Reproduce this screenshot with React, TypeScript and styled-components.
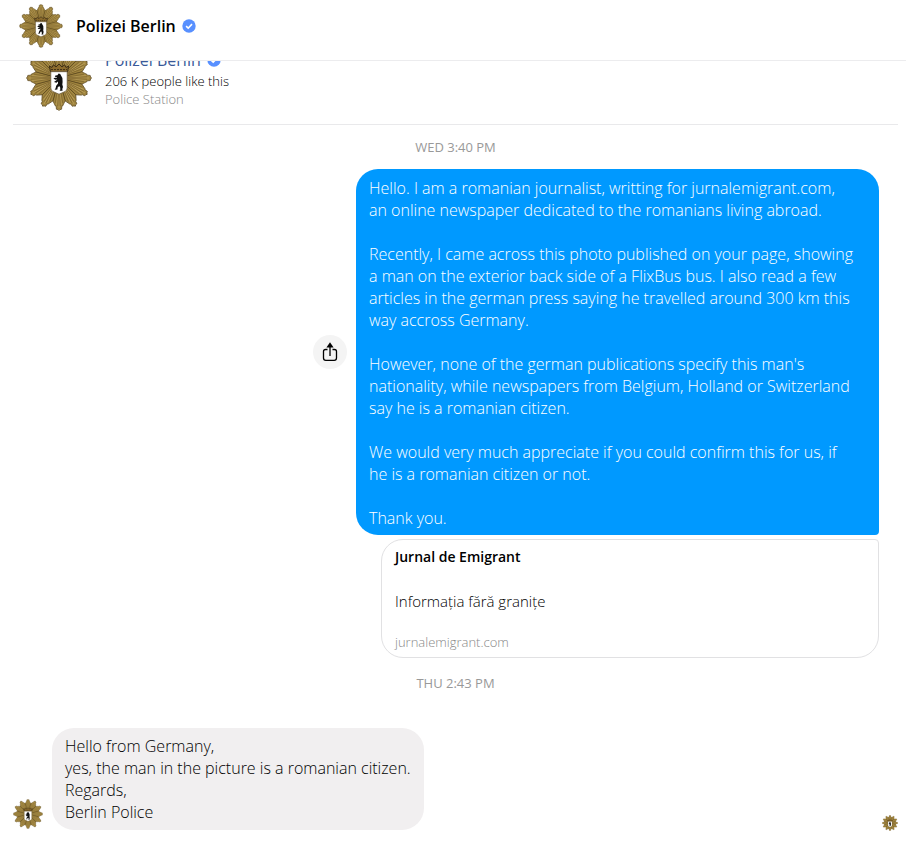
import React from "react";
import styled, { createGlobalStyle } from "styled-components";

const GlobalStyle = createGlobalStyle`
  * { box-sizing: border-box; }
  body {
    margin: 0;
    background: #fff;
    color: #000;
    font-family: "Segoe UI", "Open Sans", "Noto Sans", sans-serif;
  }
`;

const Page = styled.div`
  min-height: 100vh;
  overflow: hidden;
`;

const Header = styled.header`
  position: relative;
  z-index: 1;
  display: flex;
  align-items: center;
  gap: 13px;
  height: 61px;
  padding: 0 19px 8px;
  background: #fff;
  border-bottom: 1px solid #ececee;
`;

const HeaderTitle = styled.h1`
  display: flex;
  align-items: center;
  gap: 6px;
  margin: 0;
  font-size: 16px;
  line-height: 22px;
  font-weight: 600;
`;

const Conversation = styled.main`
  padding: 0 8px 0 13px;
`;

const Profile = styled.section`
  display: flex;
  align-items: flex-start;
  gap: 13px;
  margin-top: -16px;
  padding: 0 13px 13px;
  border-bottom: 1px solid #e9e9eb;
`;

const ProfileText = styled.div`
  padding-top: 3px;
`;

const ProfileName = styled.a`
  display: flex;
  align-items: center;
  gap: 6px;
  color: #385898;
  font-size: 16px;
  line-height: 24px;
  text-decoration: none;
`;

const ProfileLine = styled.p<{ $muted?: boolean }>`
  margin: 0;
  font-size: 13px;
  font-weight: 300;
  line-height: 18px;
  color: ${(p) => (p.$muted ? "#888" : "#000")};
`;

const Time = styled.time`
  display: block;
  padding: 13px 0;
  text-align: center;
  text-transform: uppercase;
  font-size: 13px;
  line-height: 18px;
  color: #999;
`;

const Messages = styled.section<{ $own?: boolean }>`
  display: flex;
  flex-direction: column;
  align-items: ${(p) => (p.$own ? "flex-end" : "flex-start")};
  gap: 4px;
  padding-right: 19px;
  padding-bottom: 3px;
`;

const MessageRow = styled.div<{ $align: "center" | "flex-end" }>`
  display: flex;
  align-items: ${(p) => p.$align};
  justify-content: flex-end;
  gap: 9px;
`;

const Bubble = styled.div<{ $own?: boolean }>`
  padding: ${(p) => (p.$own ? "8px 13px 6px" : "7px 13px")};
  max-width: 523px;
  white-space: pre-line;
  font-size: 16px;
  font-weight: 300;
  line-height: 22px;
  color: ${(p) => (p.$own ? "#fff" : "#000")};
  background: ${(p) => (p.$own ? "#0099ff" : "#f1eff0")};
  border-radius: ${(p) => (p.$own ? "22px 22px 4px 22px" : "22px")};
`;

const ShareButton = styled.button`
  display: grid;
  place-items: center;
  flex: none;
  width: 34px;
  height: 34px;
  padding: 0;
  border: 0;
  border-radius: 50%;
  background: #f4f4f4;
`;

const LinkCard = styled.a`
  display: block;
  width: 498px;
  max-width: 100%;
  padding: 6px 13px 5px;
  border: 1px solid #e1e1e3;
  border-radius: 22px 4px 22px 22px;
  color: #000;
  text-decoration: none;
`;

const CardTitle = styled.strong`
  display: block;
  font-size: 14px;
  line-height: 22px;
  font-weight: 600;
`;

const CardText = styled.span`
  display: block;
  margin: 22px 0 20px;
  font-size: 15px;
  font-weight: 300;
  line-height: 22px;
`;

const CardSite = styled.span`
  display: block;
  font-size: 13px;
  font-weight: 300;
  line-height: 20px;
  color: #888;
`;

const Reply = styled.div`
  padding-top: 23px;
`;

const SenderAvatar = styled.div`
  padding-bottom: 1px;
`;

const Footer = styled.footer`
  display: flex;
  justify-content: flex-end;
  margin-top: -18px;
`;

const EmblemSvg = styled.svg<{ $size: number }>`
  display: block;
  flex: none;
  width: ${(p) => p.$size}px;
  height: ${(p) => p.$size}px;
`;

const rays = Array.from({ length: 12 }, (_, i) => i * 30);

function Emblem({ size }: { size: number }) {
  return (
    <EmblemSvg $size={size} viewBox="0 0 66 66" role="img" aria-label="Polizei Berlin">
      <circle cx="33" cy="33" r="24" fill="#7d6735" />
      {rays.map((a) => (
        <g key={a} transform={`rotate(${a} 33 33)`}>
          <path
            d="M33 33 L26.8 10.2 L29.4 5 L30.2 4.6 L30.4 1.8 L32 1.4 L33 .4 L34 1.4 L35.6 1.8 L35.8 4.6 L36.6 5 L39.2 10.2 Z"
            fill="#a0853f"
            stroke="#57441c"
            strokeWidth="0.7"
            strokeLinejoin="round"
          />
          <path d="M33 30 V3 M33 30 L30.6 6 M33 30 L35.4 6" stroke="#bba05a" strokeWidth="0.8" fill="none" />
          <path d="M33 30 L31.8 5 M33 30 L34.2 5 M33 30 L29.2 8 M33 30 L36.8 8" stroke="#765d28" strokeWidth="0.6" fill="none" />
        </g>
      ))}
      <path d="M24.5 27 L23.4 21 L26 22.5 L27.5 19.8 L30 22 L33 19 L36 22 L38.5 19.8 L40 22.5 L42.6 21 L41.5 27 Z" fill="#8b6b2d" stroke="#3d2e15" strokeWidth="1" />
      <path d="M25 24.6 H41" stroke="#3d2e15" strokeWidth="1" strokeDasharray="2 1" />
      <path d="M24.8 26.7 H41.2 V43 Q41.2 46 38 47 L33 49.2 L28 47 Q24.8 46 24.8 43 Z" fill="#fff" stroke="#665534" strokeWidth="0.7" />
      <path
        d="M31.4 30.2 L32.6 28.6 L34.2 29 L35 30.6 L36.4 33 L36.6 37 L36.3 39.6 L37 42 L36.3 44 L36.6 45.8 L33.6 45.8 L34.3 44.4 L34.2 42.6 L33.2 41 L31.6 42.6 L31.4 44.4 L28.6 44.8 L29.6 43.2 L30.2 40.8 L32 38.4 L32 36.6 L30.4 37.8 L28 37 L29.4 36 L31.4 34.5 L29.4 34.8 L27.4 33.6 L28.8 32.8 L31 32.8 L30.6 32 L28.8 31.8 L29.4 30.6 Z"
        fill="#111"
      />
    </EmblemSvg>
  );
}

function Verified() {
  return (
    <svg width="14" height="14" viewBox="0 0 14 14" role="img" aria-label="Verified">
      <circle cx="7" cy="7" r="6.7" fill="#5890ff" />
      <path d="M4.1 7.2 L6.2 9.2 L10 5.1" fill="none" stroke="#fff" strokeWidth="1.6" />
    </svg>
  );
}

function ShareIcon() {
  return (
    <svg width="16" height="20" viewBox="0 0 16 20" aria-hidden="true">
      <path d="M5.5 7.5 H3.5 Q1.5 7.5 1.5 9.5 V16 Q1.5 18.3 3.8 18.3 H12.2 Q14.5 18.3 14.5 16 V9.5 Q14.5 7.5 12.5 7.5 H10.5 M8 14 V4" fill="none" stroke="#000" strokeWidth="1.3" />
      <path d="M8 .3 L11.6 5.5 H4.4 Z" fill="#000" />
    </svg>
  );
}

const question = `Hello. I am a romanian journalist, writting for jurnalemigrant.com,
an online newspaper dedicated to the romanians living abroad.

Recently, I came across this photo published on your page, showing
a man on the exterior back side of a FlixBus bus. I also read a few articles in the german press saying he travelled around 300 km this way accross Germany.

However, none of the german publications specify this man's nationality, while newspapers from Belgium, Holland or Switzerland say he is a romanian citizen.

We would very much appreciate if you could confirm this for us, if
he is a romanian citizen or not.

Thank you.`;

const answer = `Hello from Germany,
yes, the man in the picture is a romanian citizen.
Regards,
Berlin Police`;

export default function App() {
  return (
    <Page>
      <GlobalStyle />
      <Header>
        <Emblem size={44} />
        <HeaderTitle>
          Polizei Berlin <Verified />
        </HeaderTitle>
      </Header>
      <Conversation>
        <Profile>
          <Emblem size={66} />
          <ProfileText>
            <ProfileName href="#">
              Polizei Berlin <Verified />
            </ProfileName>
            <ProfileLine>206 K people like this</ProfileLine>
            <ProfileLine $muted>Police Station</ProfileLine>
          </ProfileText>
        </Profile>
        <Time>Wed 3:40 PM</Time>
        <Messages $own>
          <MessageRow $align="center">
            <ShareButton type="button" aria-label="Share">
              <ShareIcon />
            </ShareButton>
            <Bubble $own>{question}</Bubble>
          </MessageRow>
          <LinkCard href="#">
            <CardTitle>Jurnal de Emigrant</CardTitle>
            <CardText>Informația fără granițe</CardText>
            <CardSite>jurnalemigrant.com</CardSite>
          </LinkCard>
        </Messages>
        <Time>Thu 2:43 PM</Time>
        <Reply>
          <Messages>
            <MessageRow $align="flex-end">
              <SenderAvatar>
                <Emblem size={30} />
              </SenderAvatar>
              <Bubble>{answer}</Bubble>
            </MessageRow>
          </Messages>
        </Reply>
        <Footer>
          <Emblem size={16} />
        </Footer>
      </Conversation>
    </Page>
  );
}
